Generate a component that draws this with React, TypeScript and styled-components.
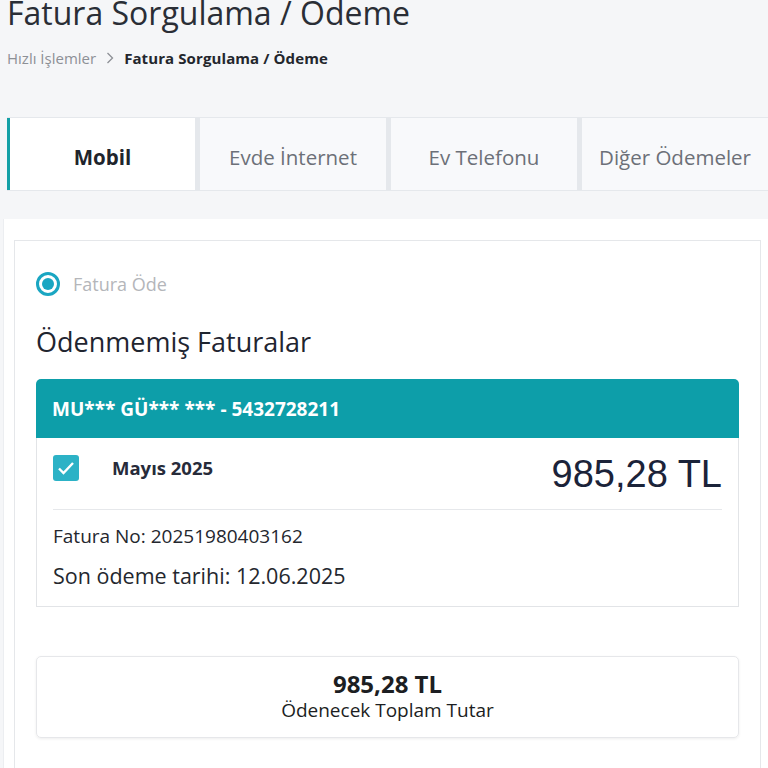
import styled, { createGlobalStyle } from "styled-components";

const GlobalStyle = createGlobalStyle`
  body {
    margin: 0;
    background: #f5f6f8;
    font-family: "Open Sans", "Noto Sans", sans-serif;
    color: #1f2530;
    overflow: hidden;
  }
`;

const Page = styled.div`
  width: 768px;
  height: 768px;
  overflow: hidden;
`;

const Header = styled.header`
  padding: 0 0 0 7px;
`;

const PageTitle = styled.h1`
  margin: -5px 0 0;
  font-size: 32px;
  font-weight: 400;
  line-height: 36px;
  color: #2a2e36;
  white-space: nowrap;
`;

const Breadcrumb = styled.nav`
  display: flex;
  align-items: center;
  gap: 10px;
  margin-top: 18px;
  font-size: 15px;
  line-height: 18px;
`;

const Crumb = styled.span<{ $current?: boolean }>`
  color: ${(p) => (p.$current ? "#23262d" : "#8d9096")};
  font-weight: ${(p) => (p.$current ? 700 : 400)};
  letter-spacing: ${(p) => (p.$current ? "0.1px" : "0")};
`;

const TabBar = styled.div`
  display: grid;
  grid-template-columns: 188px 186px 186px 186px;
  gap: 5px;
  margin-top: 50px;
  padding: 1px 0;
  background: #e5e8ec;
`;

const Tab = styled.div<{ $active?: boolean }>`
  height: 72px;
  display: flex;
  align-items: center;
  justify-content: center;
  padding-top: 5px;
  box-sizing: border-box;
  background: ${(p) => (p.$active ? "#ffffff" : "#f8f9fb")};
  border-left: ${(p) => (p.$active ? "3px solid #14a0a6" : "none")};
  font-size: 20.5px;
  font-weight: ${(p) => (p.$active ? 700 : 400)};
  color: ${(p) => (p.$active ? "#20242c" : "#6c7078")};
  white-space: nowrap;
`;

const Panel = styled.section`
  margin: 28px 0 0 3px;
  padding: 21px 6px 0 10px;
  background: #ffffff;
  border-left: 1px solid #eceef1;
  height: 600px;
`;

const Card = styled.div`
  width: 747px;
  border: 1px solid #e5e7ea;
  padding: 31px 0 0 21px;
  height: 560px;
  box-sizing: border-box;
`;

const RadioRow = styled.label`
  display: flex;
  align-items: center;
  gap: 13px;
  font-size: 18px;
  color: #b4b6ba;
`;

const RadioCircle = styled.span`
  width: 24px;
  height: 24px;
  box-sizing: border-box;
  border: 3px solid #1aa6c2;
  border-radius: 50%;
  display: flex;
  align-items: center;
  justify-content: center;
  &::after {
    content: "";
    width: 12px;
    height: 12px;
    border-radius: 50%;
    background: #1aa6c2;
  }
`;

const SectionTitle = styled.h2`
  margin: 30px 0 0;
  font-size: 27px;
  font-weight: 400;
  line-height: 31px;
  color: #1f2530;
`;

const InvoiceBox = styled.div`
  width: 703px;
  margin-top: 22px;
`;

const InvoiceHeader = styled.div`
  height: 59px;
  display: flex;
  align-items: center;
  padding: 0 16px;
  background: #0d9ea9;
  border-radius: 5px 5px 0 0;
  color: #ffffff;
  font-size: 19px;
  font-weight: 700;
`;

const InvoiceBody = styled.div`
  border: 1px solid #e2e4e7;
  border-top: none;
  padding: 0 16px 18px;
`;

const InvoiceRow = styled.div`
  display: flex;
  align-items: flex-start;
  height: 72px;
  padding-top: 17px;
  box-sizing: border-box;
  border-bottom: 1px solid #e6e8eb;
`;

const CheckBox = styled.span`
  width: 26px;
  height: 26px;
  border-radius: 3px;
  background: #2cb2c6;
  display: flex;
  align-items: center;
  justify-content: center;
  flex-shrink: 0;
`;

const Month = styled.span`
  margin-left: 33px;
  font-size: 18.5px;
  font-weight: 700;
  line-height: 26px;
  color: #272b3a;
`;

const Amount = styled.span`
  margin-left: auto;
  margin-top: 1px;
  font-family: "Liberation Sans", Arial, sans-serif;
  font-size: 38px;
  line-height: 36px;
  color: #1b2339;
`;

const Detail = styled.div<{ $size: number; $gap: number }>`
  margin-top: ${(p) => p.$gap}px;
  font-size: ${(p) => p.$size}px;
  line-height: 24px;
  color: #24272e;
`;

const TotalBox = styled.div`
  width: 703px;
  height: 82px;
  box-sizing: border-box;
  margin-top: 49px;
  border: 1px solid #e6e7ea;
  border-radius: 5px;
  box-shadow: 0 1px 3px rgba(0, 0, 0, 0.07);
  display: flex;
  flex-direction: column;
  align-items: center;
  justify-content: center;
  padding-bottom: 2px;
  color: #1c1e22;
`;

const TotalAmount = styled.div`
  font-size: 24px;
  font-weight: 700;
  line-height: 28px;
`;

const TotalLabel = styled.div`
  font-size: 19px;
  line-height: 24px;
`;

const tabs = ["Mobil", "Evde İnternet", "Ev Telefonu", "Diğer Ödemeler"];

export default function App() {
  return (
    <Page>
      <GlobalStyle />
      <Header>
        <PageTitle>Fatura Sorgulama / Ödeme</PageTitle>
        <Breadcrumb>
          <Crumb>Hızlı İşlemler</Crumb>
          <svg width="8" height="12" viewBox="0 0 8 12">
            <path d="M1.5 1l5 5-5 5" fill="none" stroke="#8d9096" strokeWidth="1.3" />
          </svg>
          <Crumb $current>Fatura Sorgulama / Ödeme</Crumb>
        </Breadcrumb>
        <TabBar>
          {tabs.map((t, i) => (
            <Tab key={t} $active={i === 0}>
              {t}
            </Tab>
          ))}
        </TabBar>
      </Header>
      <Panel>
        <Card>
          <RadioRow>
            <RadioCircle />
            Fatura Öde
          </RadioRow>
          <SectionTitle>Ödenmemiş Faturalar</SectionTitle>
          <InvoiceBox>
            <InvoiceHeader>MU*** GÜ*** *** - 5432728211</InvoiceHeader>
            <InvoiceBody>
              <InvoiceRow>
                <CheckBox>
                  <svg width="18" height="14" viewBox="0 0 18 14">
                    <path d="M2 7.5l4.5 4.5L16 2" fill="none" stroke="#fff" strokeWidth="2.4" />
                  </svg>
                </CheckBox>
                <Month>Mayıs 2025</Month>
                <Amount>985,28 TL</Amount>
              </InvoiceRow>
              <Detail $size={19} $gap={14}>Fatura No: 20251980403162</Detail>
              <Detail $size={21.5} $gap={16}>Son ödeme tarihi: 12.06.2025</Detail>
            </InvoiceBody>
          </InvoiceBox>
          <TotalBox>
            <TotalAmount>985,28 TL</TotalAmount>
            <TotalLabel>Ödenecek Toplam Tutar</TotalLabel>
          </TotalBox>
        </Card>
      </Panel>
    </Page>
  );
}
